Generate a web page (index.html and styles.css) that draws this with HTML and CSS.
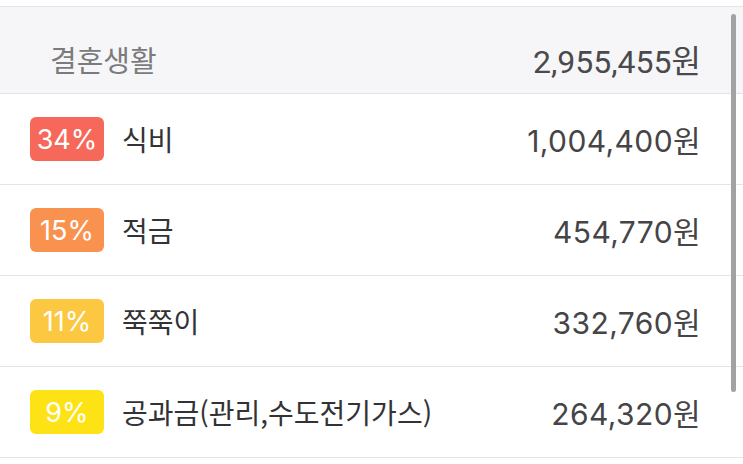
FILE: index.html
```html
<!DOCTYPE html>
<html lang="ko">
<head>
<meta charset="utf-8">
<link rel="stylesheet" href="styles.css">
</head>
<body>
<div class="screen">
  <div class="list">
    <div class="header">
      <span class="header-title">결혼생활</span>
      <span class="header-amount">2,955,455원</span>
    </div>
    <div class="row">
      <span class="badge badge-red">34%</span>
      <span class="label">식비</span>
      <span class="amount">1,004,400원</span>
    </div>
    <div class="row">
      <span class="badge badge-orange">15%</span>
      <span class="label">적금</span>
      <span class="amount">454,770원</span>
    </div>
    <div class="row">
      <span class="badge badge-amber">11%</span>
      <span class="label">쭉쭉이</span>
      <span class="amount">332,760원</span>
    </div>
    <div class="row">
      <span class="badge badge-yellow">9%</span>
      <span class="label">공과금(관리,수도전기가스)</span>
      <span class="amount">264,320원</span>
    </div>
  </div>
  <div class="scrollbar"></div>
</div>
</body>
</html>
```
FILE: styles.css
```css
html, body {
  margin: 0;
  padding: 0;
  background: #ffffff;
}
body {
  width: 743px;
  height: 464px;
  overflow: hidden;
  font-family: "Noto Sans", "Noto Sans CJK KR", sans-serif;
}
.screen {
  position: relative;
  padding-top: 6px;
}
.list {
  border-top: 1px solid #e4e4e6;
}
.header {
  height: 87px;
  box-sizing: border-box;
  background: #f6f6f8;
  border-bottom: 1px solid #e4e4e6;
  display: flex;
  align-items: center;
  justify-content: space-between;
  padding: 18px 42px 0 50px;
}
.header-title {
  font-family: "Noto Sans CJK KR", sans-serif;
  font-size: 29px;
  color: #7b7b7d;
}
.header-amount {
  font-family: Roboto, "Noto Sans CJK KR", sans-serif;
  font-size: 32px;
  color: #4a4a4c;
}
.row {
  height: 91px;
  box-sizing: border-box;
  border-bottom: 1px solid #e4e4e6;
  display: flex;
  align-items: center;
  padding: 0 42px 0 30px;
}
.badge {
  width: 74px;
  height: 44px;
  border-radius: 6px;
  display: flex;
  align-items: center;
  justify-content: center;
  color: #ffffff;
  font-family: Inter, sans-serif;
  font-size: 27px;
  margin-right: 18px;
}
.badge-red { background: #f6685a; }
.badge-orange { background: #f9924f; }
.badge-amber { background: #fcc841; }
.badge-yellow { background: #fde315; }
.label {
  flex: 1;
  font-family: "Noto Sans CJK KR", sans-serif;
  font-size: 28px;
  color: #333335;
}
.amount {
  font-family: Inter, "Noto Sans CJK KR", sans-serif;
  font-size: 30px;
  letter-spacing: 0.4px;
  color: #454547;
}
.scrollbar {
  position: absolute;
  left: 731px;
  top: 14px;
  width: 5px;
  height: 378px;
  border-radius: 3px;
  background: #a2a2a4;
}
```
